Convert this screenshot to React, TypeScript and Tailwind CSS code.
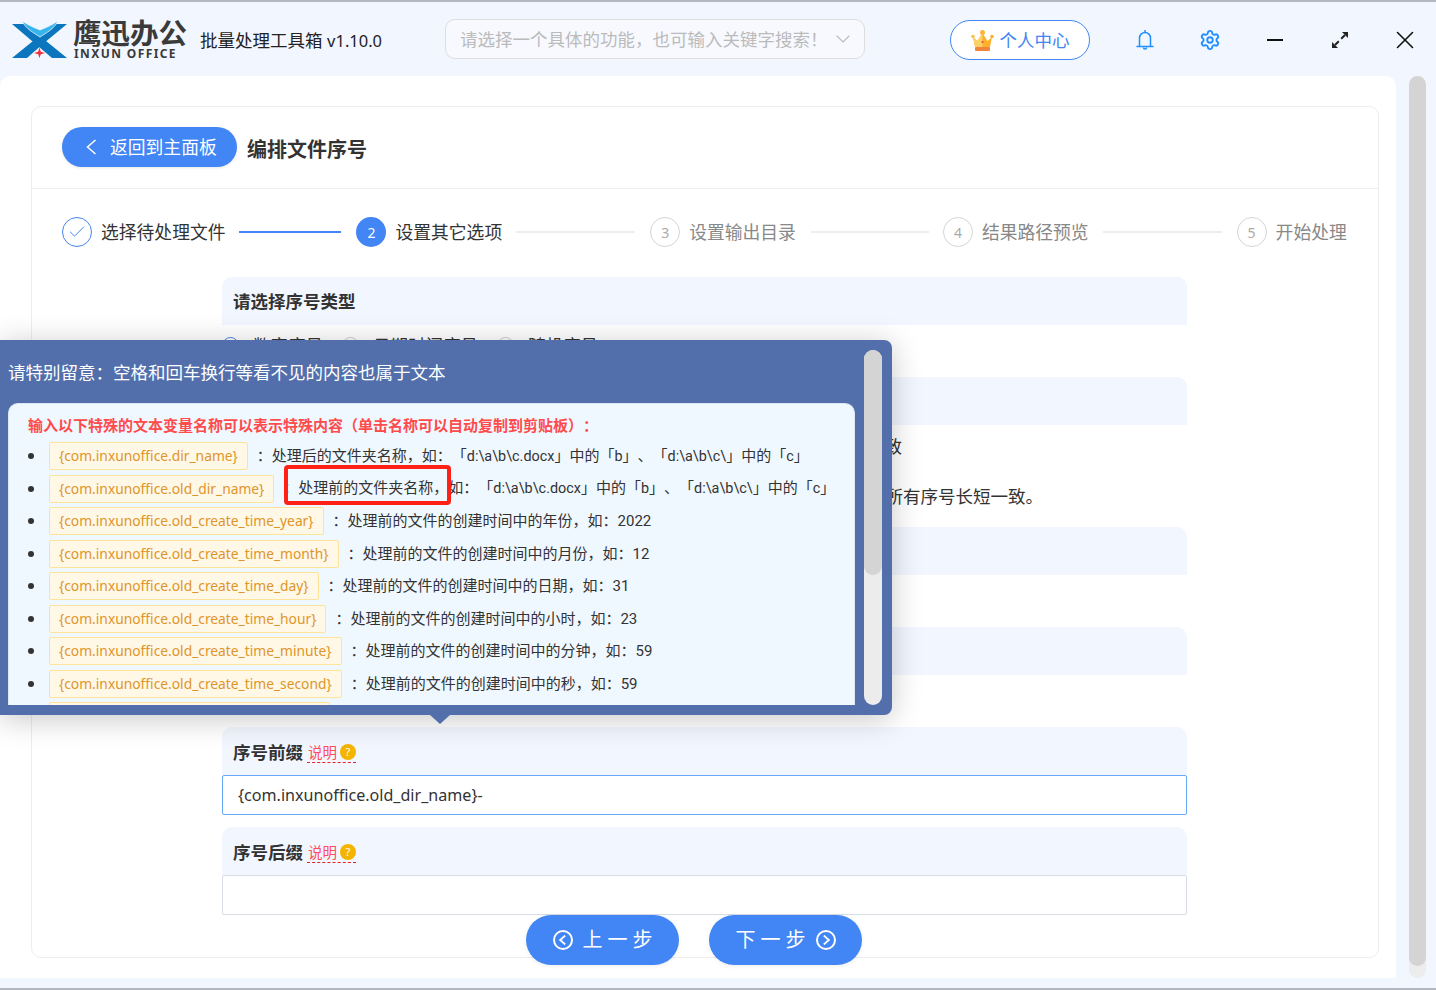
import type { ReactNode } from "react"
import { Check, ChevronDown, Settings, X } from "lucide-react"

const font = "font-['Noto_Sans','Noto_Sans_CJK_SC',sans-serif]"

function Eg({ children }: { children: ReactNode }) {
  return <span className="text-[14.400px]">{children}</span>
}

const pathExample = (
  <>
    如：「<Eg>d:\a\b\c.docx</Eg>」中的「<Eg>b</Eg>」、「<Eg>d:\a\b\c\</Eg>」中的「<Eg>c</Eg>」
  </>
)

const variables: { name: string; text: ReactNode }[] = [
  { name: "{com.inxunoffice.dir_name}", text: <>：处理后的文件夹名称，{pathExample}</> },
  { name: "{com.inxunoffice.old_dir_name}", text: <>：处理前的文件夹名称，{pathExample}</> },
  { name: "{com.inxunoffice.old_create_time_year}", text: "：处理前的文件的创建时间中的年份，如：2022" },
  { name: "{com.inxunoffice.old_create_time_month}", text: "：处理前的文件的创建时间中的月份，如：12" },
  { name: "{com.inxunoffice.old_create_time_day}", text: "：处理前的文件的创建时间中的日期，如：31" },
  { name: "{com.inxunoffice.old_create_time_hour}", text: "：处理前的文件的创建时间中的小时，如：23" },
  { name: "{com.inxunoffice.old_create_time_minute}", text: "：处理前的文件的创建时间中的分钟，如：59" },
  { name: "{com.inxunoffice.old_create_time_second}", text: "：处理前的文件的创建时间中的秒，如：59" },
]

function Logo() {
  return (
    <svg width="55" height="37" viewBox="0 0 55 37">
      <path d="M0 3H13L55 37H40Z" fill="#0b76bd" />
      <path d="M55 3H42L0 37H15L32 22Z" fill="#0b76bd" />
      <path d="M10 0C16 4 23 7 28 9C33 7 40 4 46 0C42 8 34 12 28 16C22 12 14 8 10 0Z" fill="#36b5ec" stroke="#f2f6ff" strokeWidth="0.8" />
      <path d="M27.500 26.500L28.800 30.700L33 32L28.800 33.300L27.500 37L26.200 33.300L22 32L26.200 30.700Z" fill="#f0313c" />
    </svg>
  )
}

function Crown() {
  return (
    <svg width="23" height="21" viewBox="0 0 23 21">
      <path d="M2 7L6.500 11L11.500 3L16.500 11L21 7L19 17H4Z" fill="#fdb12a" />
      <path d="M2 7L6.500 11L11.500 3V17H4Z" fill="#fbd067" />
      <rect x="4" y="17" width="15" height="4" rx="1" fill="#f2843c" />
      <circle cx="2" cy="6.500" r="1.800" fill="#fbc04a" />
      <circle cx="21" cy="6.500" r="1.800" fill="#fdb12a" />
      <circle cx="11.500" cy="2.500" r="2.500" fill="#fbb53a" />
      <circle cx="11.500" cy="12" r="1" fill="#e0483a" />
    </svg>
  )
}

function BellIcon() {
  return (
    <svg width="18" height="20" viewBox="0 0 18 20" fill="none" stroke="#1e90ff" strokeWidth="1.500">
      <path d="M3.500 16V8A5.500 5.500 0 0 1 14.500 8V16" />
      <path d="M1 16.500H17" strokeLinecap="round" />
      <path d="M9 0.500V2.500" strokeLinecap="round" />
      <path d="M7.500 17.500A1.500 1.500 0 0 0 10.500 17.500" />
    </svg>
  )
}

function Expand() {
  return (
    <svg width="16" height="16" viewBox="0 0 16 16" fill="none">
      <path d="M3 13L6.800 9.200M9.200 6.800L13 3" stroke="#222" strokeWidth="2" />
      <path d="M10 0H16V6Z" fill="#222" />
      <path d="M0 10V16H6Z" fill="#222" />
    </svg>
  )
}

function Chevron({ dir, size, w }: { dir: "left" | "right"; size: number; w: number }) {
  return (
    <svg width={size} height={size} viewBox="0 0 16 16" fill="none" stroke="currentColor" strokeWidth={w}>
      <path d={dir === "left" ? "M11.500 1L3.500 8L11.500 15" : "M4.500 1L12.500 8L4.500 15"} />
    </svg>
  )
}

function Step({ n, label, state }: { n: number; label: string; state: "done" | "active" | "todo" }) {
  return (
    <div className="flex items-center shrink-0">
      {state === "done" && (
        <span className="w-[30px] h-[30px] rounded-full border border-[#4285f4] flex items-center justify-center text-[#4285f4]">
          <Check size={20} strokeWidth={1.2} />
        </span>
      )}
      {state === "active" && (
        <span className="w-[30px] h-[30px] rounded-full bg-[#4285f4] flex items-center justify-center text-white text-[14px]">{n}</span>
      )}
      {state === "todo" && (
        <span className="w-[30px] h-[30px] rounded-full border border-[#d5d5d5] flex items-center justify-center text-[#aaa] text-[14px]">{n}</span>
      )}
      <span className={`ml-[9px] text-[17.800px] leading-[30px] ${state === "todo" ? "text-[#888]" : "text-[#333]"}`}>{label}</span>
    </div>
  )
}

function SectionTitle({ title, hint }: { title?: string; hint?: boolean }) {
  return (
    <div className={`h-[48px] bg-[#f2f6ff] rounded-t-[10px] px-[11px] flex items-center ${hint ? "pt-[2px]" : ""}`}>
      {title && <span className="text-[17.500px] font-bold text-[#333]">{title}</span>}
      {hint && (
        <span className="ml-[4px] flex items-center gap-[3px] border-b border-dashed border-[#e8202a] mt-[2px] pb-[1px]">
          <span className="text-[14.500px] leading-[18px] text-[#ff4d5a] pl-[1px]">说明</span>
          <span className="w-[16px] h-[16px] rounded-full bg-[#f5b400] text-white text-[11px] leading-[16px] text-center">?</span>
        </span>
      )}
    </div>
  )
}

function Radio({ label, checked }: { label: string; checked?: boolean }) {
  return (
    <span className="flex items-center gap-[14px]">
      <span className={`w-[17px] h-[17px] rounded-full border ${checked ? "border-[#4285f4]" : "border-[#ccc]"}`} />
      <span className="text-[17.500px] leading-[18px] text-[#333]">{label}</span>
    </span>
  )
}

function Popover() {
  return (
    <div className="absolute left-0 top-[340px] w-[892px] h-[375px] bg-[#526fab] rounded-r-[8px] shadow-[0_4px_30px_rgba(0,0,0,0.22)]">
      <div className="pl-[8px] pt-[19px] text-[17.500px] leading-[27px] text-white">请特别留意：空格和回车换行等看不见的内容也属于文本</div>
      <div className="absolute left-[8px] top-[63px] w-[847px] h-[302px] bg-[#f0f8ff] rounded-t-[10px] border-t border-x border-[#dce8f5] overflow-hidden pl-[19px] pt-[11px] [text-spacing-trim:space-all]">
        <div className="text-[15px] leading-[20px] font-bold text-[#ff4b4b] whitespace-nowrap">输入以下特殊的文本变量名称可以表示特殊内容（单击名称可以自动复制到剪贴板）：</div>
        <ul className="mt-[5px]">
          {variables.map((v) => (
            <li key={v.name} className="flex items-center h-[32.500px] whitespace-nowrap">
              <span className="w-[6px] h-[6px] rounded-full bg-[#333] mr-[15px]" />
              <span className="h-[28px] px-[9px] leading-[26px] border border-[#fde49a] bg-[#fff8e6] rounded-[2px] text-[13.800px] text-[#e0952a] mr-[9px]">{v.name}</span>
              <span className="text-[15px] text-[#333] font-['Roboto','Noto_Sans_CJK_SC',sans-serif]">{v.text}</span>
            </li>
          ))}
          <li className="flex items-center h-[32.500px]">
            <span className="w-[6px] h-[6px] mr-[15px]" />
            <span className="w-[281px] h-[28px] border border-[#fde49a] bg-[#fff8e6] rounded-[2px]" />
          </li>
        </ul>
      </div>
      <div className="absolute left-[864px] top-[10px] w-[18px] h-[355px] rounded-full bg-[#ececec]">
        <div className="h-[225px] rounded-full bg-[#d4d4d4]" />
      </div>
      <div className="absolute left-[430px] top-[375px] w-0 h-0 border-x-[10px] border-x-transparent border-t-[9px] border-t-[#526fab]" />
      {/* 红框标注 */}
      <div className="absolute left-[284px] top-[125px] w-[167px] h-[40px] border-[4px] border-[#ff2116] rounded-[4px]" />
    </div>
  )
}

export default function App() {
  return (
    <div className={`relative w-[1436px] h-[990px] overflow-hidden bg-[#f2f6ff] flex flex-col ${font}`}>
      <div className="h-[2px] bg-[#b4b6c0] shrink-0" />
      <header className="h-[74px] shrink-0 flex items-center pl-[12px]">
        <Logo />
        <div className="ml-[6px] w-[120px] -mt-[1px]">
          <div className="text-[28.500px] leading-[30px] font-bold text-[#3a3a3a] whitespace-nowrap">鹰迅办公</div>
          <div className="text-[12px] leading-[11px] font-bold tracking-[1.400px] text-[#3a3a3a] whitespace-nowrap pl-[1px]">INXUN OFFICE</div>
        </div>
        <div className="ml-[7px] mt-[3px] w-[245px] text-[17.500px] text-[#222] whitespace-nowrap">批量处理工具箱 <span className="text-[16.500px]">v1.10.0</span></div>
        <div className="w-[420px] h-[40px] border border-[#ddd] bg-white/40 rounded-[10px] flex items-center justify-between pl-[14px] pr-[9px]">
          <span className="text-[17.500px] text-[#bbb] whitespace-nowrap">请选择一个具体的功能，也可输入关键字搜索！</span>
          <ChevronDown size={24} strokeWidth={1.1} className="text-[#bbb]" />
        </div>
        <div className="ml-[85px] mt-[2px] w-[140px] h-[40px] rounded-full border border-[#4285f4] bg-white flex items-center justify-center gap-[6px]">
          <Crown />
          <span className="text-[17.500px] text-[#4285f4]">个人中心</span>
        </div>
        <span className="ml-[46px] mt-[1px]"><BellIcon /></span>
        <Settings size={22} strokeWidth={2} className="ml-[45px] mt-[1px] text-[#1e90ff]" />
        <span className="ml-[46px] mt-[2px] w-[16px] h-[2px] bg-[#111]" />
        <span className="ml-[49px] mt-[2px]"><Expand /></span>
        <X size={30} strokeWidth={1.3} className="ml-[42px] mt-[2px] text-[#111]" />
      </header>

      <div className="flex-1 flex min-h-0">
        <main className="w-[1396px] bg-white rounded-t-[10px] pl-[31px] pr-[17px] pt-[30px] pb-[20px]">
          <div className="h-[852px] border border-[#eeeeee] rounded-[10px]">
            <div className="h-[82px] border-b border-[#eeeeee] flex items-center pl-[30px]">
              <button className="w-[175px] h-[40px] mb-[2px] rounded-full bg-[#4285f4] text-white flex items-center pl-[22px] shadow-[0_1px_3px_rgba(0,0,0,0.1)]">
                <Chevron dir="left" size={16} w={1.5} />
                <span className="ml-[10px] mt-[2px] text-[17.800px]">返回到主面板</span>
              </button>
              <span className="ml-[10px] mt-[5px] text-[20px] font-bold text-[#333]">编排文件序号</span>
            </div>

            <div className="flex items-center pl-[30px] pt-[27px] h-[59px]">
              <Step n={1} label="选择待处理文件" state="done" />
              <span className="ml-[14px] mr-[15px] w-[102px] h-[2px] bg-[#4285f4]" />
              <Step n={2} label="设置其它选项" state="active" />
              <span className="ml-[14px] mr-[15px] w-[119px] h-[2px] bg-[#eeeeee]" />
              <Step n={3} label="设置输出目录" state="todo" />
              <span className="ml-[15px] mr-[14px] w-[118px] h-[2px] bg-[#eeeeee]" />
              <Step n={4} label="结果路径预览" state="todo" />
              <span className="ml-[14px] mr-[15px] w-[119px] h-[2px] bg-[#eeeeee]" />
              <Step n={5} label="开始处理" state="todo" />
            </div>

            <div className="ml-[190px] w-[965px] mt-[29px]">
              <SectionTitle title="请选择序号类型" />
              <div className="h-[52px] pt-[11px] flex items-start gap-[19px]">
                <Radio label="数字序号" checked />
                <Radio label="日期时间序号" />
                <Radio label="随机序号" />
              </div>

              <SectionTitle />
              <div className="h-[102px] text-[17.500px] text-[#333] w-[821px] [text-spacing-trim:space-all] whitespace-nowrap">
                <p className="pt-[8px] h-[50px] leading-[26px] w-[680px] text-right">一致</p>
                <p className="pt-[8px] leading-[26px] text-right">所有序号长短一致。</p>
              </div>

              <SectionTitle />
              <div className="h-[52px]" />

              <SectionTitle />
              <div className="h-[52px]" />

              <SectionTitle title="序号前缀" hint />
              <div className="h-[40px] border border-[#66a8f5] rounded-[2px] px-[15px] leading-[38px] text-[16.100px] text-[#333]">{"{com.inxunoffice.old_dir_name}-"}</div>
              <div className="h-[12px]" />

              <SectionTitle title="序号后缀" hint />
              <div className="h-[40px] border border-[#d8dce5] rounded-[2px]" />
            </div>

            <div className="flex justify-center gap-[30px] ml-[-22px]">
              <button className="w-[153px] h-[50px] rounded-full bg-[#4285f4] text-white flex items-center justify-center gap-[10px] shadow-[0_1px_4px_rgba(0,0,0,0.08)]">
                <span className="w-[20px] h-[20px] rounded-full border-2 border-white flex items-center justify-center"><Chevron dir="left" size={10} w={3} /></span>
                <span className="text-[20px] tracking-[5px] -mr-[5px]">上一步</span>
              </button>
              <button className="w-[153px] h-[50px] rounded-full bg-[#4285f4] text-white flex items-center justify-center gap-[10px] shadow-[0_1px_4px_rgba(0,0,0,0.08)]">
                <span className="text-[20px] tracking-[5px] -mr-[5px]">下一步</span>
                <span className="w-[20px] h-[20px] rounded-full border-2 border-white flex items-center justify-center"><Chevron dir="right" size={10} w={3} /></span>
              </button>
            </div>
          </div>
        </main>
        <aside className="ml-[13px] w-[17px] h-[902px] rounded-full bg-[#ececec]">
          <div className="h-[890px] rounded-full bg-[#d4d4d4]" />
        </aside>
      </div>
      <div className="h-[12px] shrink-0 border-b-2 border-[#b4b6c0]" />

      <Popover />
    </div>
  )
}
